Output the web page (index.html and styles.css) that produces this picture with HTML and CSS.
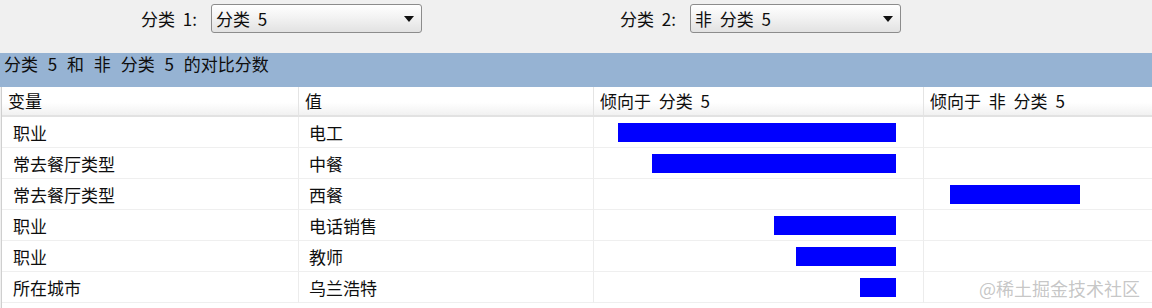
FILE: index.html
```html
<!DOCTYPE html>
<html lang="zh-CN">
<head>
  <meta charset="UTF-8">
  <title>对比分数</title>
  <link rel="stylesheet" href="styles.css">
</head>
<body>
  <!-- Category pickers -->
  <div class="toolbar">
    <div class="field first">
      <span class="field-label">分类 1:</span>
      <div class="combo"><span>分类 5</span><span class="combo-arrow"></span></div>
    </div>
    <div class="field second">
      <span class="field-label">分类 2:</span>
      <div class="combo"><span>非 分类 5</span><span class="combo-arrow"></span></div>
    </div>
  </div>

  <!-- Comparison panel -->
  <div class="panel-title">分类 5 和 非 分类 5 的对比分数</div>

  <div class="grid">
    <div class="head">变量</div>
    <div class="head">值</div>
    <div class="head">倾向于 分类 5</div>
    <div class="head last">倾向于 非 分类 5</div>
  </div>
  <div id="rows" class="table-body"></div>

  <div class="watermark">@稀土掘金技术社区</div>

  <script>
    const rows = [
      { name: "职业", value: "电工", left: 278, right: 0 },
      { name: "常去餐厅类型", value: "中餐", left: 244, right: 0 },
      { name: "常去餐厅类型", value: "西餐", left: 0, right: 130 },
      { name: "职业", value: "电话销售", left: 122, right: 0 },
      { name: "职业", value: "教师", left: 100, right: 0 },
      { name: "所在城市", value: "乌兰浩特", left: 36, right: 0 }
    ];

    const rowsElement = document.getElementById("rows");
    rows.forEach((r) => {
      const row = document.createElement("div");
      row.className = "grid row";
      row.innerHTML = `
        <div class="cell name">${r.name}</div>
        <div class="cell">${r.value}</div>
        <div class="cell toward-a">${r.left ? `<div class="bar" style="width:${r.left}px"></div>` : ""}</div>
        <div class="cell toward-b last">${r.right ? `<div class="bar" style="width:${r.right}px"></div>` : ""}</div>`;
      rowsElement.appendChild(row);
    });
  </script>
</body>
</html>
```

FILE: styles.css
```css
/* General Styling */
body {
  margin: 0;
  padding: 0;
  background: #f0f0f0;
  color: #0e0e0e;
  font-family: "Noto Sans CJK SC", "Noto Sans", sans-serif;
  font-size: 17px;
  word-spacing: 4px;
  overflow: hidden;
  height: 308px;
  position: relative;
}

/* Toolbar */
.toolbar {
  display: flex;
  align-items: flex-start;
  height: 53px;
  padding-top: 4px;
  box-sizing: border-box;
}

.field {
  display: flex;
  align-items: center;
  gap: 8px;
}

.field.first {
  margin-left: 141px;
}

.field.second {
  margin-left: 198px;
}

.field-label {
  width: 62px;
  line-height: 29px;
}

.combo {
  display: flex;
  align-items: center;
  justify-content: space-between;
  width: 211px;
  height: 29px;
  box-sizing: border-box;
  padding: 0 7px 0 4px;
  border: 1px solid #8c8c8c;
  border-radius: 3px;
  background: linear-gradient(#ffffff, #f3f3f3 45%, #e2e2e2);
  line-height: 27px;
}

.combo-arrow {
  width: 0;
  height: 0;
  border-left: 5px solid transparent;
  border-right: 5px solid transparent;
  border-top: 6px solid #111;
}

/* Panel title */
.panel-title {
  height: 34px;
  box-sizing: border-box;
  padding: 1px 4px 0;
  background: #96b3d3;
  line-height: 20px;
  word-spacing: 6px;
}

/* Table */
.grid {
  display: grid;
  grid-template-columns: 297px 295px 330px 1fr;
  margin-left: 1px;
  border-left: 1px solid #cfcfcf;
  background: #fff;
}

.table-body {
  height: 191px;
  margin-left: 1px;
  border-left: 1px solid #cfcfcf;
  background: #fff;
}

.table-body .grid {
  margin-left: 0;
  border-left: none;
}

.head {
  height: 28px;
  line-height: 28px;
  padding-left: 6px;
  border-right: 1px solid #e4e4e4;
  border-bottom: 2px solid #e2e2e2;
  background: linear-gradient(#ffffff 55%, #f1f1f1);
  white-space: nowrap;
}

.cell {
  display: flex;
  align-items: center;
  height: 30px;
  padding-left: 10px;
  border-right: 1px solid #ececec;
  border-bottom: 1px solid #efefef;
  white-space: nowrap;
}

.cell.name {
  padding-left: 11px;
}

.last {
  border-right: none;
}

.cell.toward-a {
  justify-content: flex-end;
  padding: 0 27px 0 0;
}

.cell.toward-b {
  padding-left: 26px;
}

.bar {
  height: 19px;
  background: #0000ff;
}

/* Watermark */
.watermark {
  position: absolute;
  right: 12px;
  top: 275px;
  font-size: 18px;
  word-spacing: 0;
  color: rgba(150, 150, 150, 0.55);
}
```
